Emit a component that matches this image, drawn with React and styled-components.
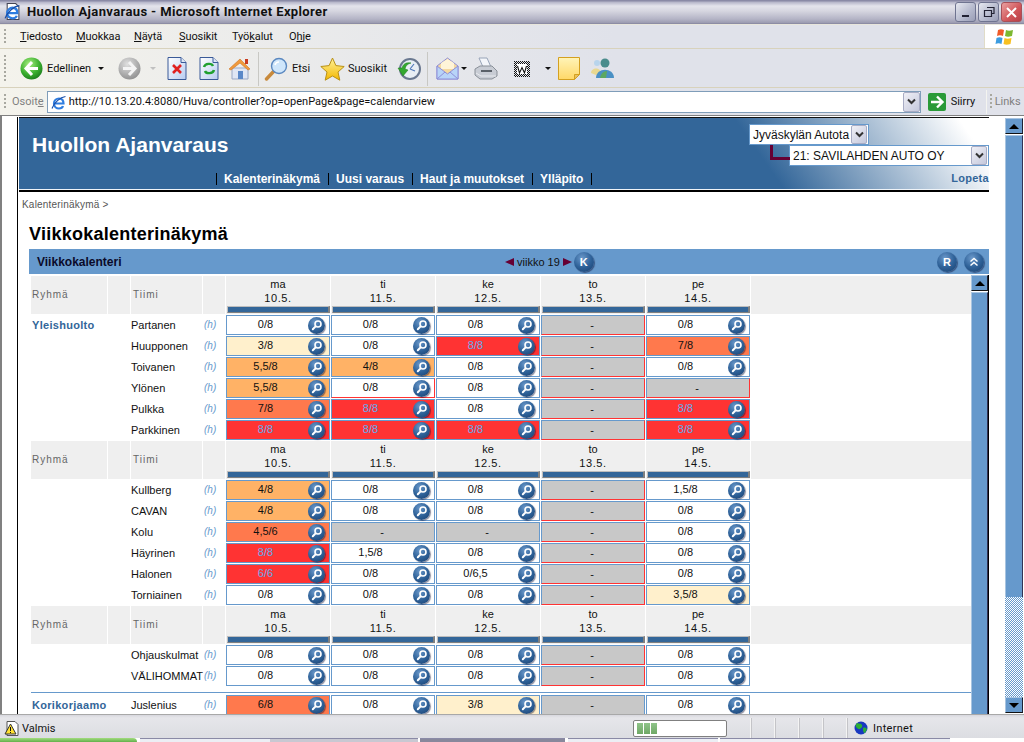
import React from "react";
import styled, { createGlobalStyle } from "styled-components";

const Global = createGlobalStyle`
  html, body { margin: 0; padding: 0; background: #fff; overflow: hidden; }
  * { box-sizing: border-box; }
`;

const UI = `"Roboto", "Liberation Sans", sans-serif`;
const WEB = `"Liberation Sans", Arial, sans-serif`;

const Window = styled.div`
  width: 1024px; height: 742px; display: flex; flex-direction: column; overflow: hidden; font-family: ${WEB};
`;
const TitleBar = styled.div`
  height: 25px; flex: none; display: flex; align-items: center; padding: 0 2px 2px 4px;
  background: linear-gradient(180deg, #8a8aa6 0, #8a8aa6 1px, #b4b4c8 2px, #e4e4ec 6px, #d6d6e0 11px, #b4b4c6 19px, #9a9ab0 23px, #7f7f99 24px, #e8e6dc 24px);
`;
const TitleText = styled.div`
  font: 700 13px ${UI}; letter-spacing: 0.37px; color: #111; margin-left: 6px; flex: 1; white-space: nowrap;
`;
const WinButtons = styled.div`display: flex; gap: 2px; margin-top: 1px;`;
const WinBtn = styled.div`
  width: 21px; height: 20px; border-radius: 3px; border: 1px solid ${p => (p.$close ? "#a85058" : "#6f7490")};
  display: flex; align-items: center; justify-content: center;
  background: ${p => (p.$close ? "linear-gradient(135deg,#e9a0a0,#d05458 60%,#b84048)" : "linear-gradient(135deg,#e6e8f0,#b4b8cc 60%,#9a9eb6)")};
`;
const MenuBar = styled.div`
  height: 24px; flex: none; display: flex; align-items: center; padding-left: 4px; font: 11px ${UI}; color: #111;
  background: linear-gradient(90deg, #f4f3ec, #e0e2ea 60%); border-bottom: 1px solid #d8d2bc;
`;
const Grip = styled.div`
  width: 2px; height: ${p => p.$h || 16}px; flex: none;
  background: repeating-linear-gradient(180deg, #a8a8a0 0 2px, transparent 2px 4px);
`;
const MenuItem = styled.span`
  width: ${p => p.$w}px; flex: none; letter-spacing: -0.1px;
  u { text-underline-offset: 1px; }
`;
const MenuList = styled.div`display: flex; margin-left: 14px; flex: 1;`;
const LogoBox = styled.div`
  width: 40px; height: 23px; background: #fff; border-left: 1px solid #e0dcc8; display: flex; align-items: center; justify-content: center;
`;
const ToolBar = styled.div`
  height: 39px; flex: none; display: flex; align-items: center; padding: 1px 0 0 4px; font: 11px ${UI}; color: #111;
  background: linear-gradient(90deg, #f4f3ec, #e0e2ea 60%); border-bottom: 1px solid #d8d2bc;
`;
const Tools = styled.div`display: flex; align-items: center; margin-left: 14px;`;
const Slot = styled.div`
  width: ${p => p.$w}px; flex: none; display: flex; align-items: center; height: 26px;
`;
const Label = styled.span`margin-left: ${p => p.$ml || 4}px; white-space: nowrap;`;
const Caret = styled.i`
  display: block; flex: none; margin-left: ${p => p.$ml}px; width: 0; height: 0;
  border: 3px solid transparent; border-bottom: 0; border-top: 3px solid ${p => (p.$off ? "#c0c0c0" : "#111")};
`;
const ToolSep = styled.div`
  width: 1px; height: 34px; background: #c8c8c4; margin-right: ${p => p.$mr}px; flex: none;
`;
const AddressBar = styled.div`
  height: 27px; flex: none; display: flex; align-items: center; padding-left: 4px; font: 11px ${UI};
  background: linear-gradient(90deg, #f4f3ec, #e0e2ea 60%);
`;
const MutedText = styled.span`color: #808080; margin-left: ${p => p.$ml}px; u { text-underline-offset: 1px; }`;
const UrlBox = styled.div`
  width: 874px; height: 22px; margin-left: 3px; margin-right: 7px; background: #fff; border: 1px solid #7f9db9; display: flex; align-items: center; padding-left: 3px; color: #111;
`;
const Url = styled.span`flex: 1; margin-left: 2px; letter-spacing: 0.03px;`;
const ComboBtn = styled.div`
  width: ${p => p.$w || 17}px; height: ${p => p.$h || 20}px; flex: none; display: flex; align-items: center; justify-content: center;
  background: linear-gradient(135deg, #f0f0f6, #c4c8dc); border: 1px solid #a8acc4; border-radius: 2px;
`;
const GoText = styled.span`margin-left: 5px; color: #111; width: 35px;`;
const VDivider = styled.div`width: 1px; height: 24px; background: #f4f4f0; margin-right: 3px;`;

const Content = styled.div`
  flex: none; height: 599px; display: flex; border-top: 1px solid #808080; background: #fff; box-shadow: inset 2px 0 0 #808080;
  overflow: hidden;
`;
const PageBody = styled.div`width: 1005px; flex: none; padding: 1px 0 0 17px; height: 100%; overflow: hidden;`;
const Frame = styled.div`
  width: 972px; border-left: 1px solid #000; padding-left: 1px; height: 100%; display: flex; flex-direction: column;
`;
const Header = styled.header`
  height: 73px; flex: none; width: 970px; border-top: 1px solid #111; display: grid; grid-template-columns: 1fr auto; grid-template-rows: 48px 1fr;
  background: linear-gradient(55deg, #336699 75%, #ffffff 97%);
  border-bottom: 1px solid #f0f4f8;
`;
const BlackRule = styled.div`height: 2px; width: 970px; background: #000; flex: none;`;
const SiteTitle = styled.h1`
  margin: 0; font: 700 21px ${WEB}; color: #fff; padding: 12px 0 0 13px; line-height: 30px;
`;
const Selects = styled.div`
  grid-row: 1 / span 2; grid-column: 2; padding-top: 6px; width: 240px; display: flex; flex-direction: column; align-items: flex-start; position: relative;
`;
const Connector = styled.div`
  position: absolute; left: 21px; top: 27px; width: 20px; height: 15px; border-left: 3px solid #660033; border-bottom: 3px solid #660033;
`;
const Select = styled.div`
  height: 21px; width: ${p => p.$w}px; margin-left: ${p => p.$ml}px; background: #fff; border: 1px solid #6699cc; display: flex; align-items: center;
  font: 12px ${WEB}; color: #111; padding-left: 3px; justify-content: space-between; white-space: nowrap; padding-right: 1px;
`;
const Nav = styled.nav`
  display: flex; align-items: center; padding: 0 0 0 197px; font: 700 12px ${WEB}; color: #fff; grid-row: 2; grid-column: 1; height: 22px; margin-top: 2px;
`;
const NavItem = styled.span`
  border-left: 1px solid #000; height: 12px; line-height: 12px; padding: 0 8px 0 7px; white-space: nowrap;
  &:last-child { padding: 0; }
`;
const LogoutRow = styled.div`
  margin-top: auto; align-self: flex-end; font: 700 11px ${WEB}; color: #336699; padding-bottom: 6px; letter-spacing: .3px;
`;
const Crumb = styled.div`
  font: 10px ${WEB}; color: #555; letter-spacing: 0.2px; padding: 7px 0 0 3px; height: 20px; flex: none;
`;
const PageTitle = styled.h2`
  margin: 0; font: 700 18px ${WEB}; color: #000; padding: 12px 0 0 10px; height: 37px; line-height: 20px; flex: none; letter-spacing: .25px;
`;
const Panel = styled.section`
  width: 960px; margin-left: 10px; flex: 1; display: flex; flex-direction: column; min-height: 0;
`;
const PanelHead = styled.div`
  height: 25px; flex: none; background: #6699cc; display: grid; grid-template-columns: 476px auto 1fr; align-items: center;
`;
const PanelTitle = styled.span`font: 700 12px ${WEB}; color: #0a0a2a; padding-left: 8px;`;
const WeekNav = styled.div`display: flex; align-items: center; font: 11px ${WEB}; color: #111;`;
const WeekArrow = styled.i`
  display: block; width: 0; height: 0; border: 4px solid transparent; border-left: 0; border-right: 9px solid #660033;
  transform: ${p => (p.$next ? "scaleX(-1)" : "none")};
`;
const WeekText = styled.span`margin: 0 3px;`;
const PanelActions = styled.div`display: flex; justify-content: flex-end; gap: 7px; padding-right: 5px;`;
const Round = styled.div`
  width: ${p => p.$s}px; height: ${p => p.$s}px; border-radius: 50%; flex: none; margin-left: ${p => p.$ml || 0}px;
  background: radial-gradient(circle at 40% 30%, #6a98ca 0, #2f6299 50%, #173c6b 100%);
  box-shadow: 1px 1px 1px rgba(0,0,40,.45);
  display: flex; align-items: center; justify-content: center; color: #fff; font: 700 11px ${WEB};
`;
const CalBody = styled.div`flex: 1; display: flex; min-height: 0; padding-top: 1px; overflow: hidden;`;
const Rows = styled.div`width: 942px; flex: none; padding-left: 2px;`;
const grid = `display: grid; grid-template-columns: 76px 22px 71px 22px repeat(5, 104px) 220px; column-gap: 1px;`;
const HeadRow = styled.div`${grid} height: 38px; margin-top: 1px;`;
const HeadCell = styled.div`
  background: #efefef; font: 10px ${WEB}; color: #666; letter-spacing: 1px; display: flex; align-items: center; height: 38px;
  padding: 0 0 2px ${p => p.$pl || 0}px;
`;
const DayCell = styled.div`
  background: #efefef; display: flex; flex-direction: column; align-items: center; font: 11px ${WEB}; color: #111; height: 38px; padding-top: 1px;
  line-height: 14px;
`;
const DayDate = styled.span`letter-spacing: 0.6px;`;
const DayBar = styled.div`
  margin-top: auto; margin-bottom: 1px; width: 103px; height: 7px; background: #336699;
  border-style: solid; border-width: 1px 2px 1px 1px; border-color: #bdbdbd #808080 #808080 #bdbdbd;
`;
const Row = styled.div`${grid} height: 21px; padding-top: 1px;`;
const GroupName = styled.div`font: 700 11px ${WEB}; color: #336699; letter-spacing: .3px; line-height: 20px; grid-column: 1 / span 2; white-space: nowrap; padding-left: 1px;`;
const TeamName = styled.div`font: 11px ${WEB}; color: #111; line-height: 20px; white-space: nowrap; grid-column: 3; `;
const HourLink = styled.div`font: italic 10px ${WEB}; color: #6699cc; line-height: 20px; padding-left: 1px;`;
const tones = { white: "#fff", cream: "#fff0cc", orange: "#ffb266", coral: "#ff794d", red: "#ff3333", off: "#c8c8c8" };
const Cell = styled.div`
  height: 20px; display: flex; align-items: center; background: ${p => tones[p.$tone]}; color: ${p => (p.$tone === "red" ? "#66aaee" : "#111")};
  border: 1px solid #6699cc; ${p => p.$alert && "border-right-color: #ff3333; border-bottom-color: #ff3333;"}
  font: 11px ${WEB}; padding-right: ${p => (p.$tone === "off" ? 2 : 4)}px;
`;
const CellText = styled.span`flex: 1; text-align: center; padding-right: ${p => (p.$full ? 0 : 4)}px; margin-top: ${p => (p.$full ? 0 : -2)}px;`;
const GroupRule = styled.div`height: 1px; width: 940px; background: #6699cc; margin: 6px 0 1px;`;
const Scroll = styled.div`
  width: ${p => p.$w}px; flex: none; display: flex; flex-direction: column; ${p => p.$edge && "border-right: 1px solid #000; height: 100%;"}
`;
const ScrollBtn = styled.div`
  height: ${p => p.$h}px; flex: none; background: #6699cc; border: 1px solid #a8c4e0; border-right-color: #223; border-bottom-color: #111;
  display: flex; align-items: center; justify-content: center; margin-bottom: ${p => p.$mb || 0}px;
`;
const Thumb = styled.div`
  flex: ${p => (p.$h ? "none" : 1)}; height: ${p => (p.$h ? p.$h + "px" : "auto")}; background: #6699cc; border-left: 1px solid #a8c4e0; border-top: 1px solid #a8c4e0; border-right: 1px solid #335;
`;
const Track = styled.div`
  flex: 1; background: repeating-conic-gradient(#6699cc 0 25%, #ffffff 0 50%) 0 0 / 2px 2px;
`;
const Triangle = styled.i`
  display: block; width: 0; height: 0; border-left: 5px solid transparent; border-right: 5px solid transparent;
  ${p => (p.$down ? "border-top: 5px solid #000;" : "border-bottom: 5px solid #000;")}
`;
const PageScroll = styled.div`width: 18px; flex: none; display: flex; flex-direction: column; padding-top: 2px; height: 597px;`;

const StatusBar = styled.div`
  height: 24px; flex: none; display: flex; align-items: center; padding: 3px 0 0 4px; font: 11px ${UI}; color: #111;
  background: linear-gradient(180deg, #d8d8de 0, #e6e6ea 3px, #dcdde2 100%); border-top: 1px solid #a8a8a8;
`;
const StatusText = styled.span`margin-left: 3px; width: 585px;`;
const StatusGap = styled.span`width: 26px; flex: none;`;
const Progress = styled.div`
  width: 94px; height: 17px; border: 1px solid #808080; border-radius: 2px; background: #fff; display: flex; gap: 1px; padding: 2px 3px;
`;
const ProgressBlock = styled.i`display: block; width: 6px; background: linear-gradient(180deg, #8fc489, #6fa866);`;
const StatusCell = styled.div`width: 24px; height: 20px; border-right: 1px solid #f4f4f4; flex: none; box-shadow: 1px 0 0 #c4c4c8;`;
const Zone = styled.div`display: flex; align-items: center; margin-left: 7px; letter-spacing: .3px;`;
const ZoneLabel = styled.span`margin-left: 5px;`;
const TaskStrip = styled.div`height: 4px; flex: none; display: flex; background: #fff;`;
const StartBtn = styled.div`width: 137px; background: linear-gradient(180deg, #a4dc80, #62b04c); border-radius: 0 4px 0 0;`;
const TaskBtn = styled.div`width: ${p => p.$w}px; background: ${p => ({ light: "#eceef4", mid: "#c8c8d2", dark: "#88889c" }[p.$kind])}; border-top: 1px solid #8a8aa6; margin-left: ${p => p.$ml || 0}px;`;

const Chevron = () => (
  <svg width="9" height="7" viewBox="0 0 9 7"><path d="M1 1.500 4.500 5 8 1.500" fill="none" stroke="#333" strokeWidth="2" /></svg>
);
const Lens = () => (
  <svg width="12" height="12" viewBox="0 0 12 12">
    <circle cx="7" cy="5" r="3" fill="none" stroke="#fff" strokeWidth="1.600" />
    <path d="M4.600 7.400 1.800 10.200" stroke="#fff" strokeWidth="2" strokeLinecap="round" />
  </svg>
);
const IEGlyph = ({ size = 16, page = false }) => (
  <svg width={size} height={size} viewBox="0 0 16 16">
    {page && <path d="M3 .5h8l3 3v12H3z" fill="#fff" stroke="#445" />}
    <path d="M4 9.500h8.500C12.500 6 10.500 4.500 8 4.500S3 6.500 3 9.500s2.500 5 5 5c2 0 3.500-1 4-2.500" fill="none" stroke="#2f7de0" strokeWidth="2.200" />
    <path d="M1 14.500C3 9 9 3 14.500 2.500" fill="none" stroke="#1a4fa8" strokeWidth="1.200" />
  </svg>
);
const BackIcon = () => (
  <svg width="23" height="23" viewBox="0 0 23 23">
    <defs><radialGradient id="bk" cx="40%" cy="30%" r="75%"><stop offset="0" stopColor="#a8ee80" /><stop offset=".6" stopColor="#3cb030" /><stop offset="1" stopColor="#1a7a1c" /></radialGradient></defs>
    <circle cx="11.500" cy="11.500" r="11" fill="url(#bk)" />
    <path d="M12 5 6 11.500l6 6.500M6.500 11.500H18" fill="none" stroke="#fff" strokeWidth="3" />
  </svg>
);
const ForwardIcon = () => (
  <svg width="23" height="23" viewBox="0 0 23 23">
    <defs><radialGradient id="fw" cx="40%" cy="30%" r="75%"><stop offset="0" stopColor="#e0e0e0" /><stop offset="1" stopColor="#8e8e8e" /></radialGradient></defs>
    <circle cx="11.500" cy="11.500" r="11" fill="url(#fw)" />
    <path d="M11 5l6 6.500-6 6.500M16.500 11.500H5" fill="none" stroke="#f4f4f4" strokeWidth="3" />
  </svg>
);
const DocIcon = ({ children, id }) => (
  <svg width="20" height="23" viewBox="0 0 20 23">
    <defs><linearGradient id={id} x1="0" y1="0" x2="1" y2="1"><stop offset="0" stopColor="#fff" /><stop offset="1" stopColor="#b8ccf0" /></linearGradient></defs>
    <path d="M1 .5h13l5 5v17H1z" fill={`url(#${id})`} stroke="#3a5a98" />
    <path d="M14 .5v5h5" fill="#dde6f6" stroke="#3a5a98" />
    {children}
  </svg>
);
const HomeIcon = () => (
  <svg width="24" height="24" viewBox="0 0 24 24">
    <path d="M4 11h16v11H4z" fill="#dfe6f4" stroke="#9aa8c4" />
    <path d="M1 12 12 2l10 10-2 1-8-7-9 7z" fill="#f09a3c" stroke="#d07420" strokeWidth=".6" />
    <rect x="17" y="2" width="3" height="5" fill="#c83a20" />
    <rect x="10" y="14" width="5" height="8" fill="#5a88c8" />
  </svg>
);
const SearchIcon = () => (
  <svg width="24" height="24" viewBox="0 0 24 24">
    <path d="M10 14 2.500 22" stroke="#c88a3c" strokeWidth="3.400" strokeLinecap="round" />
    <circle cx="15" cy="9" r="7.500" fill="#cfe6fb" stroke="#5a88c0" strokeWidth="1.400" />
    <path d="M11 8a4 4 0 0 1 4-3" stroke="#fff" strokeWidth="1.600" fill="none" />
  </svg>
);
const StarIcon = () => (
  <svg width="25" height="24" viewBox="0 0 25 24">
    <defs><linearGradient id="st" x1="0" y1="0" x2="0" y2="1"><stop offset="0" stopColor="#fff29a" /><stop offset="1" stopColor="#f4b800" /></linearGradient></defs>
    <path d="M12.500 1l3.400 7.600 8.300.9-6.200 5.500 1.800 8.200-7.300-4.200-7.300 4.200 1.800-8.200L.8 9.500l8.300-.9z" fill="url(#st)" stroke="#b89018" />
  </svg>
);
const HistoryIcon = () => (
  <svg width="24" height="24" viewBox="0 0 24 24">
    <circle cx="13" cy="12" r="10" fill="#e8eef4" stroke="#6a7890" strokeWidth="2" />
    <path d="M13 12l4-5M13 12l5 2" stroke="#5078b8" strokeWidth="1.200" />
    <path d="M1 11l5 8 5-6-3-1c1-4 3-5 6-6-5-1-8 1-9 5z" fill="#34a830" stroke="#1c7a1c" strokeWidth=".5" />
  </svg>
);
const MailIcon = () => (
  <svg width="23" height="23" viewBox="0 0 23 23">
    <path d="M1 9 11.500 1 22 9v13H1z" fill="#f4d8a0" stroke="#8f8fd8" />
    <path d="M5 6 11.500 2 18 6v6H5z" fill="#fff4d8" />
    <path d="M1 9l10.500 8L22 9v13H1z" fill="#b8d4f8" stroke="#8f8fd8" />
    <path d="M1 22l8-7M22 22l-8-7" stroke="#8f8fd8" fill="none" />
  </svg>
);
const PrinterIcon = () => (
  <svg width="24" height="24" viewBox="0 0 24 24">
    <path d="M5 1h8l4 9H9z" fill="#f4f6fa" stroke="#98a4b8" />
    <path d="M1 12l5-3h12l5 5v5l-5 3H6l-5-4z" fill="#c8ccd4" stroke="#8a9098" />
    <path d="M7 14h11" stroke="#5a6068" strokeWidth="2" />
    <path d="M2 16l5 3h15" stroke="#e8eaee" fill="none" />
  </svg>
);
const WordIcon = () => (
  <svg width="16" height="16" viewBox="0 0 16 16">
    <defs><pattern id="wd" width="2" height="2" patternUnits="userSpaceOnUse"><rect width="1" height="1" fill="#111" /><rect x="1" y="1" width="1" height="1" fill="#111" /></pattern></defs>
    <rect width="16" height="16" fill="url(#wd)" />
    <rect x="3" y="3" width="10" height="10" fill="#fff" />
    <path d="M3.500 5l2 7 2.500-5.500L10.500 12l2-7" fill="none" stroke="#111" strokeWidth="1.100" />
  </svg>
);
const NoteIcon = () => (
  <svg width="23" height="23" viewBox="0 0 23 23">
    <defs><linearGradient id="nt" x1="0" y1="0" x2="0" y2="1"><stop offset="0" stopColor="#fff4b8" /><stop offset="1" stopColor="#ffd868" /></linearGradient></defs>
    <path d="M.5.5h21v17l-5 5H.5z" fill="url(#nt)" stroke="#d4a020" />
    <path d="M21.500 17.500h-5v5z" fill="#e8c060" stroke="#d4a020" />
  </svg>
);
const MessengerIcon = () => (
  <svg width="24" height="21" viewBox="0 0 24 21">
    <circle cx="7" cy="5" r="3" fill="#b8d4ec" />
    <path d="M1 15c0-6 10-6 10 0l-5 2z" fill="#e8d890" />
    <circle cx="15" cy="5" r="4.500" fill="#4a8c8c" />
    <path d="M6 20c0-11 18-11 18 0z" fill="#4a90c4" />
    <path d="M10 20c1-6 5-7 7-7l-1 7z" fill="#5ca860" />
  </svg>
);
const GoIcon = () => (
  <svg width="18" height="18" viewBox="0 0 18 18">
    <rect width="18" height="18" rx="2" fill="#2a9a38" />
    <path d="M9 3.500 14.500 9 9 14.500M14 9H3" fill="none" stroke="#fff" strokeWidth="2.400" />
  </svg>
);
const WinFlag = () => (
  <svg width="20" height="18" viewBox="0 0 20 18">
    <path d="M3 2c2-1 4-1 6 0l-1 6c-2-1-4-1-6 0z" fill="#f05a28" />
    <path d="M11 2c2 1 4 1 7 0l-1 6c-3 1-5 1-7 0z" fill="#7cb830" />
    <path d="M1.500 10c2-1 4-1 6 0l-1 6c-2-1-4-1-6 0z" fill="#3c9ce0" />
    <path d="M9.500 10c2 1 4 1 7 0l-1 6c-3 1-5 1-7 0z" fill="#f8c020" />
  </svg>
);
const WarnIcon = () => (
  <svg width="15" height="15" viewBox="0 0 15 15">
    <path d="M3 .5h8l3 3v11H3z" fill="#fff" stroke="#555" />
    <path d="M6.500 3 12 13H1z" fill="#ffe030" stroke="#333" />
    <path d="M6.500 6v4M6.500 11v1" stroke="#111" />
  </svg>
);
const GlobeIcon = () => (
  <svg width="14" height="14" viewBox="0 0 14 14">
    <circle cx="7" cy="7" r="6.500" fill="#1838c0" />
    <path d="M3 2c2 1 4 0 5 2s-1 3-2 4-3-1-4-2 0-3 1-4zM9 7c2-1 3 0 4 1l-2 4c-2 0-2-3-2-5z" fill="#2cae34" />
  </svg>
);

const DAYS = [["ma", "10.5."], ["ti", "11.5."], ["ke", "12.5."], ["to", "13.5."], ["pe", "14.5."]];
const MENU = [
  [56, <><u>T</u>iedosto</>], [58, <><u>M</u>uokkaa</>], [45, <><u>N</u>äytä</>], [53, <><u>S</u>uosikit</>],
  [57, <>Työ<u>k</u>alut</>], [40, <>O<u>h</u>je</>],
];
const GROUPS = [
  { rows: [
    ["Yleishuolto", "Partanen", ["0/8", "0/8", "0/8", "-", "0/8"]],
    ["", "Huupponen", ["3/8", "0/8", "8/8", "-", "7/8"]],
    ["", "Toivanen", ["5,5/8", "4/8", "0/8", "-", "0/8"]],
    ["", "Ylönen", ["5,5/8", "0/8!", "0/8", "-", "-"]],
    ["", "Pulkka", ["7/8", "8/8", "0/8", "-", "8/8"]],
    ["", "Parkkinen", ["8/8", "8/8", "8/8", "-", "8/8"]],
  ] },
  { rows: [
    ["", "Kullberg", ["4/8", "0/8", "0/8", "-", "1,5/8"]],
    ["", "CAVAN", ["4/8", "0/8", "0/8", "-", "0/8"]],
    ["", "Kolu", ["4,5/6", "–", "–", "-", "0/8"]],
    ["", "Häyrinen", ["8/8", "1,5/8", "0/8", "-", "0/8"]],
    ["", "Halonen", ["6/6", "0/8", "0/6,5", "-", "0/8"]],
    ["", "Torniainen", ["0/8", "0/8", "0/8", "-", "3,5/8"]],
  ] },
  { rows: [
    ["", "Ohjauskulmat", ["0/8", "0/8", "0/8", "-", "0/8"]],
    ["", "VÄLIHOMMAT", ["0/8", "0/8", "0/8", "-", "0/8"]],
  ] },
];
const LAST = ["Korikorjaamo", "Juslenius", ["6/8", "0/8", "3/8", "–", "0/8"]];

function toneOf(value) {
  const [a, b] = value.split("/").map(v => parseFloat(v.replace(",", ".")));
  const r = a / b;
  if (r === 0 || r < 0.3) return "white";
  if (r < 0.45) return "cream";
  if (r < 0.72) return "orange";
  if (r < 1) return "coral";
  return "red";
}

function DayValue({ value }) {
  if (value === "-" || value === "–") {
    return (
      <Cell $tone="off" $alert={value === "-"}>
        <CellText $full>-</CellText>
      </Cell>
    );
  }
  const alert = value.endsWith("!");
  const v = value.replace("!", "");
  return (
    <Cell $tone={toneOf(v)} $alert={alert}>
      <CellText>{v}</CellText>
      <Round $s={17}><Lens /></Round>
    </Cell>
  );
}

function TeamRow({ row }) {
  return (
    <Row>
      <GroupName>{row[0]}</GroupName>
      <TeamName>{row[1]}</TeamName>
      <HourLink>(h)</HourLink>
      {row[2].map((v, i) => <DayValue key={i} value={v} />)}
    </Row>
  );
}

function HeaderRow() {
  return (
    <HeadRow>
      <HeadCell $pl={1}>Ryhmä</HeadCell>
      <HeadCell />
      <HeadCell $pl={2}>Tiimi</HeadCell>
      <HeadCell />
      {DAYS.map(d => (
        <DayCell key={d[0]}>
          <span>{d[0]}</span>
          <DayDate>{d[1]}</DayDate>
          <DayBar />
        </DayCell>
      ))}
      <HeadCell />
    </HeadRow>
  );
}

export default function App() {
  return (
    <Window>
      <Global />
      <TitleBar>
        <IEGlyph size={17} page />
        <TitleText>Huollon Ajanvaraus - Microsoft Internet Explorer</TitleText>
        <WinButtons>
          <WinBtn><svg width="12" height="12" viewBox="0 0 12 12"><path d="M2 10h7" stroke="#223" strokeWidth="2" /></svg></WinBtn>
          <WinBtn><svg width="12" height="12" viewBox="0 0 12 12"><path d="M4 1.500h7v6H9M1.500 4.500h7v6h-7z" fill="none" stroke="#223" strokeWidth="1.200" /></svg></WinBtn>
          <WinBtn $close><svg width="13" height="13" viewBox="0 0 13 13"><path d="M2 2l9 9M11 2l-9 9" stroke="#fff" strokeWidth="2" /></svg></WinBtn>
        </WinButtons>
      </TitleBar>
      <MenuBar>
        <Grip />
        <MenuList>
          {MENU.map((m, i) => <MenuItem key={i} $w={m[0]}>{m[1]}</MenuItem>)}
        </MenuList>
        <LogoBox><WinFlag /></LogoBox>
      </MenuBar>
      <ToolBar>
        <Grip $h={28} />
        <Tools>
          <Slot $w={98}><BackIcon /><Label>Edellinen</Label><Caret $ml={7} /></Slot>
          <Slot $w={49}><ForwardIcon /><Caret $ml={9} $off /></Slot>
          <Slot $w={32}><DocIcon id="d1"><path d="M6 8l8 8M14 8l-8 8" stroke="#e02020" strokeWidth="2.600" /></DocIcon></Slot>
          <Slot $w={29}><DocIcon id="d2"><path d="M5 10c1-4 8-4 9-1M15 13c-1 4-8 4-9 1" fill="none" stroke="#20a030" strokeWidth="2.400" /></DocIcon></Slot>
          <Slot $w={30}><HomeIcon /></Slot>
          <ToolSep $mr={5} />
          <Slot $w={56}><SearchIcon /><Label>Etsi</Label></Slot>
          <Slot $w={77}><StarIcon /><Label $ml={3}>Suosikit</Label></Slot>
          <Slot $w={30}><HistoryIcon /></Slot>
          <ToolSep $mr={8} />
          <Slot $w={38}><MailIcon /><Caret $ml={2} /></Slot>
          <Slot $w={40}><PrinterIcon /></Slot>
          <Slot $w={44}><WordIcon /><Caret $ml={15} /></Slot>
          <Slot $w={32}><NoteIcon /></Slot>
          <Slot $w={30}><MessengerIcon /></Slot>
        </Tools>
      </ToolBar>
      <AddressBar>
        <Grip />
        <MutedText $ml={6}>Osoit<u>e</u></MutedText>
        <UrlBox>
          <IEGlyph size={16} />
          <Url>http://10.13.20.4:8080/Huva/controller?op=openPage&amp;page=calendarview</Url>
          <ComboBtn><Chevron /></ComboBtn>
        </UrlBox>
        <GoIcon />
        <GoText>Siirry</GoText>
        <VDivider />
        <Grip />
        <MutedText $ml={3}>Links</MutedText>
      </AddressBar>
      <Content>
        <PageBody>
          <Frame>
            <Header>
              <SiteTitle>Huollon Ajanvaraus</SiteTitle>
              <Nav>
                <NavItem>Kalenterinäkymä</NavItem>
                <NavItem>Uusi varaus</NavItem>
                <NavItem>Haut ja muutokset</NavItem>
                <NavItem>Ylläpito</NavItem>
                <NavItem />
              </Nav>
              <Selects>
                <Select $w={120} $ml={0}>Jyväskylän Autota<ComboBtn $w={16} $h={19}><Chevron /></ComboBtn></Select>
                <Connector />
                <Select $w={200} $ml={40}>21: SAVILAHDEN AUTO OY<ComboBtn $w={16} $h={19}><Chevron /></ComboBtn></Select>
                <LogoutRow>Lopeta</LogoutRow>
              </Selects>
            </Header>
            <BlackRule />
            <Crumb>Kalenterinäkymä &gt;</Crumb>
            <PageTitle>Viikkokalenterinäkymä</PageTitle>
            <Panel>
              <PanelHead>
                <PanelTitle>Viikkokalenteri</PanelTitle>
                <WeekNav>
                  <WeekArrow />
                  <WeekText>viikko 19</WeekText>
                  <WeekArrow $next />
                  <Round $s={20} $ml={2}>K</Round>
                </WeekNav>
                <PanelActions>
                  <Round $s={20}>R</Round>
                  <Round $s={20}>
                    <svg width="10" height="10" viewBox="0 0 10 10"><path d="M1.500 4.500 5 1.500l3.500 3M1.500 8.500 5 5.500l3.500 3" fill="none" stroke="#fff" strokeWidth="1.500" /></svg>
                  </Round>
                </PanelActions>
              </PanelHead>
              <CalBody>
                <Rows>
                  {GROUPS.map((g, i) => (
                    <React.Fragment key={i}>
                      <HeaderRow />
                      {g.rows.map(r => <TeamRow key={r[1]} row={r} />)}
                    </React.Fragment>
                  ))}
                  <GroupRule />
                  <TeamRow row={LAST} />
                </Rows>
                <Scroll $w={18} $edge>
                  <ScrollBtn $h={16} $mb={1}><Triangle /></ScrollBtn>
                  <Thumb />
                </Scroll>
              </CalBody>
            </Panel>
          </Frame>
        </PageBody>
        <PageScroll>
          <ScrollBtn $h={16} $mb={1}><Triangle /></ScrollBtn>
          <Thumb $h={462} />
          <Track />
          <ScrollBtn $h={16}><Triangle $down /></ScrollBtn>
        </PageScroll>
      </Content>
      <StatusBar>
        <WarnIcon />
        <StatusText>Valmis</StatusText>
        <StatusGap />
        <Progress><ProgressBlock /><ProgressBlock /><ProgressBlock /></Progress>
        <StatusCell />
        <StatusCell />
        <StatusCell />
        <StatusCell />
        <StatusCell />
        <Zone><GlobeIcon /><ZoneLabel>Internet</ZoneLabel></Zone>
      </StatusBar>
      <TaskStrip>
        <StartBtn />
        <TaskBtn $kind="light" $w={130} $ml={3} />
        <TaskBtn $kind="mid" $w={148} />
        <TaskBtn $kind="dark" $w={145} $ml={2} />
        <TaskBtn $kind="light" $w={150} $ml={3} />
        <TaskBtn $kind="light" $w={230} $ml={2} />
      </TaskStrip>
    </Window>
  );
}
